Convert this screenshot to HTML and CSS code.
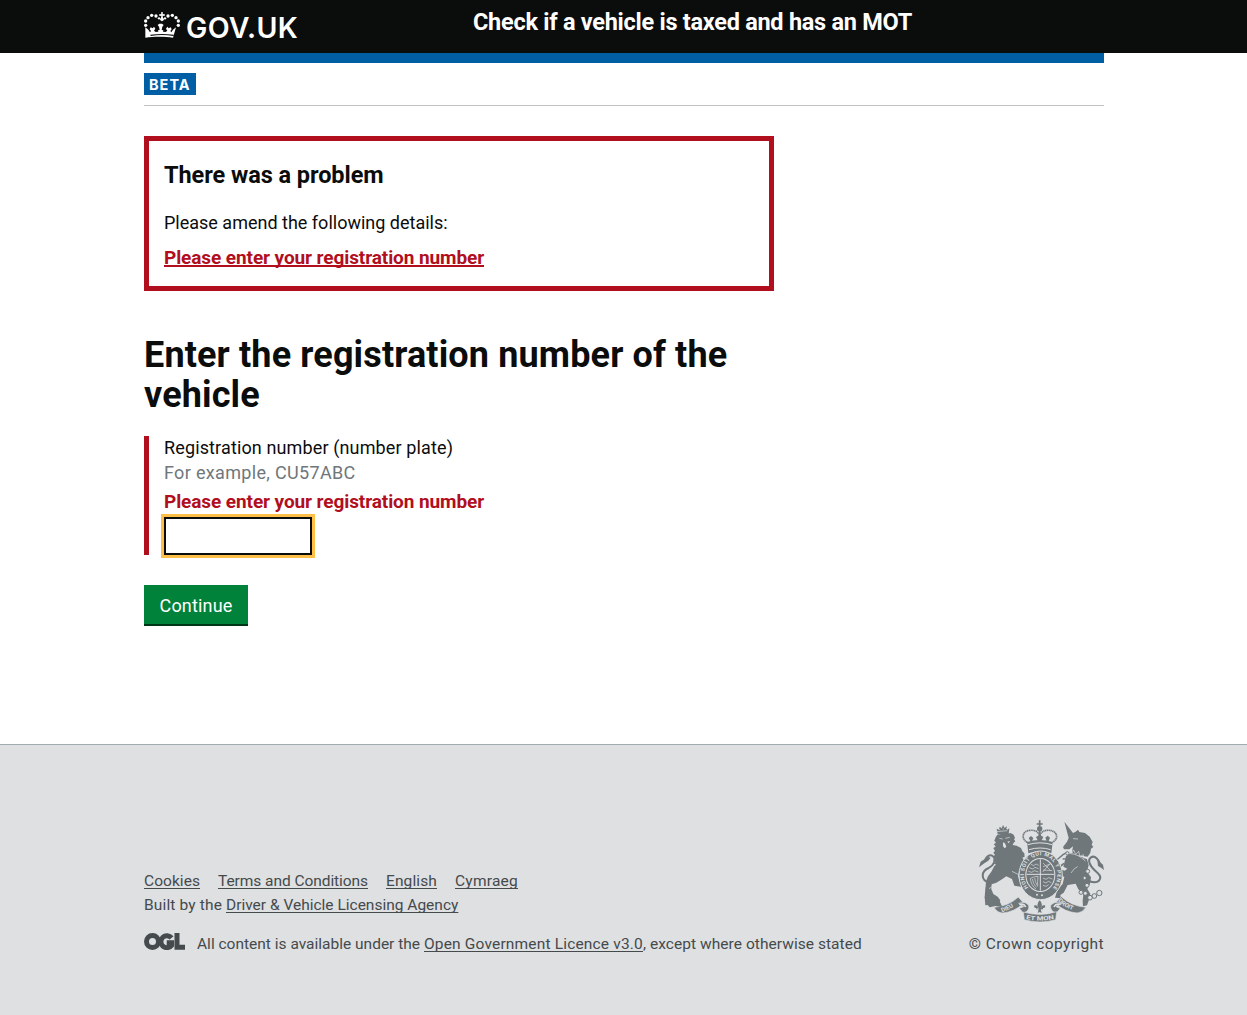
FILE: index.html
```
<!DOCTYPE html>
<html lang="en">
<head>
<meta charset="utf-8">
<title>Check if a vehicle is taxed and has an MOT</title>
<link rel="stylesheet" href="styles.css">
</head>
<body>
<header class="header">
  <div class="header-inner">
    <a class="logo" href="#">
      <svg class="crown" viewBox="30 36 108 78" aria-hidden="true">
        <g fill="#fff">
          <path d="M81 37h6l-1 6 6-1v6l-6-1 1 7h-6l1-7-6 1v-6l6 1z"/>
          <circle cx="84" cy="58" r="5.5"/>
          <circle cx="66" cy="48" r="5"/><circle cx="53" cy="46" r="5"/><circle cx="42" cy="53" r="5"/><circle cx="35" cy="63" r="5"/><circle cx="35" cy="76" r="5"/>
          <circle cx="102" cy="48" r="5"/><circle cx="115" cy="46" r="5"/><circle cx="126" cy="53" r="5"/><circle cx="133" cy="63" r="5"/><circle cx="133" cy="76" r="5"/>
          <circle cx="75" cy="55" r="3.5"/><circle cx="93" cy="55" r="3.5"/>
          <path fill-rule="evenodd" d="M34 82l9 7 5 8 3-4-4-5 3-6 6 3 4-5 4 6-4 6 5 4 8-1-1-4 5-1-2-10-4-5 5-4h8l5 4-4 5-2 10 5 1-1 4 8 1 5-4-4-6 4-6 4 5 6-3 3 6-4 5 3 4 5-8 9-7-9 31c-24-4-58-4-83 0zM50 108c22-4 46-4 68 0l1-4c-23-3-47-3-70 0z"/>
        </g>
      </svg>
      <span class="logo-text">GOV.UK</span>
    </a>
    <span class="service">Check if a vehicle is taxed and has an MOT</span>
  </div>
</header>
<main class="main">
  <div class="phase"><strong class="tag">BETA</strong></div>
  <section class="summary">
    <h2>There was a problem</h2>
    <p>Please amend the following details:</p>
    <a class="error" href="#reg">Please enter your registration number</a>
  </section>
  <h1>Enter the registration number of the vehicle</h1>
  <form>
    <div class="group">
      <label class="label" for="reg">Registration number (number plate)</label>
      <span class="hint">For example, CU57ABC</span>
      <span class="error">Please enter your registration number</span>
      <input class="input" id="reg" type="text">
    </div>
    <button class="button" type="button">Continue</button>
  </form>
</main>
<footer class="footer">
  <div class="footer-inner">
    <div>
      <nav class="links"><a class="cookies" href="#">Cookies</a><a class="terms" href="#">Terms and Conditions</a><a class="english" href="#">English</a><a class="cymraeg" href="#">Cymraeg</a></nav>
      <div class="built"><span>Built by the&nbsp;</span><a href="#">Driver &amp; Vehicle Licensing Agency</a></div>
      <div class="licence">
        <svg class="ogl" viewBox="0 0 41 17" aria-hidden="true">
          <g fill="none" stroke="#454a4c" stroke-width="5">
            <circle cx="8.5" cy="8.5" r="6"/>
            <path d="M27.6 4.9A6 6 0 1 0 27.6 12.4V9.7H22.7"/>
            <path d="M33 0V14.2H41"/>
          </g>
        </svg>
        <span class="all">All content is available under the&nbsp;</span><a class="ogl-link" href="#">Open Government Licence v3.0</a><span class="except">, except where otherwise stated</span>
      </div>
    </div>
    <div class="copyright">
      <svg class="arms" viewBox="27 24 375 306" role="img" aria-label="Royal coat of arms">
        <defs>
          <path id="motto" d="M175 227A50 58 0 1 1 249 227"/>
          <path id="dieu" d="M96 301Q126 291 148 269"/>
          <path id="mon" d="M168 321Q210 331 254 320"/>
          <path id="droit" d="M264 267Q290 293 329 300"/>
        </defs>
        <g fill="#6f777b">
          <!-- lion -->
          <path d="M80 50l7 3 2-9 6 5 4-10 5 9 6-5 1 10 7-4-2 17-33 1z"/>
          <path d="M77 76l5-8 12-2 14 0 14-3 9 5 4 10-3 4 4 6-5 4-3 7 12 2 13 7 4 10 6 6 1 10-7 3 5 8-5 8 2 11-7 3 3 10-8 1-3 15 7 18 12 9-2 6-28-5-7-20-17-8-13 9-17 10-14 5-1 15 6 14 13 8 8 11-5 9-29-6-13-11 2-28 1-6 1-15 6-15 10-14 9-17 5-4-7-4 6-5-7-3 6-7-7-5 6-6-5-5 5-7-5-7 7-6-6-6 7-5-5-6z"/>
          <!-- unicorn -->
          <path d="M283 29l26 34 8-4 7-6 4 7 17 3 14 11 9 16-3 8 5 7-7 5-2 12-8 12-40-6-7-8 3-17-11 9-16 0-3-7 12-16 5-11z"/>
          <path d="M288 132l18-10 45 20 5 18-5 19 12 17-3 20-8 15 9 15-5 20-5 14-12 3-1-16 2-21-15-14-8-17-24 4-12 23-10 7 2 10-18-2 7-23 16-18 5-22-19-4-18-19-9-5 6-9 18 5 10 10 13 4 8-6-12-6z"/>
        </g>
        <g fill="none" stroke="#6f777b" stroke-width="6">
          <path d="M60 213C29 204 34 177 56 168C75 157 78 139 68 132C59 125 50 134 45 144"/>
          <path d="M357 207C386 219 400 199 383 183C361 165 350 145 363 136C375 128 386 144 391 157"/>
          <path d="M261 143l18-15 12-7 8 10-8 9-13 1" stroke-width="4"/>
          <path d="M282 154l-11 9-7 15" stroke-width="5"/>
        </g>
        <g fill="#6f777b">
          <path d="M27 166l5-17 22-14 8 2-7 9-12 8z"/>
          <path d="M382 144l8 7 9 7 3 16-9-7-9-5z"/>
        </g>
        <g fill="none" stroke="#dee0e2" stroke-width="2">
          <path d="M79 59l33-3M86 51l5 3M98 49l4 3M108 49l5 2"/>
          <path d="M88 79l10 2M106 79l13-3"/>
          <path d="M61 161l6-12M126 178l22 11M57 230l17-11"/>
          <path d="M309 80l15 1M302 125q22 1 44 22M305 124l6-10 6 13 9-9 4 16 10-6 2 13"/>
          <path d="M303 183l10-13 10-6"/>
        </g>
        <path d="M99 91l6 3 4 10-5 5-5-6zM112 89l8-2-4 7z" fill="#dee0e2"/>
        <!-- chain -->
        <g fill="#dee0e2" stroke="#6f777b" stroke-width="3">
          <circle cx="353" cy="178" r="6"/><circle cx="344" cy="198" r="5"/><circle cx="351" cy="220" r="6"/><circle cx="333" cy="241" r="6"/><circle cx="346" cy="244" r="6"/><circle cx="360" cy="257" r="7"/><circle cx="373" cy="252" r="7"/><circle cx="388" cy="243" r="8"/><circle cx="292" cy="124" r="5"/>
        </g>
        <!-- crown -->
        <g fill="none" stroke="#6f777b" stroke-width="5">
          <path d="M172 91C153 81 157 60 174 56C192 52 206 58 209 72C212 58 227 52 244 56C263 61 266 81 247 91" stroke-dasharray="4 1.4"/>
          <path d="M209 55v34M200 36h18M209 25v18"/>
        </g>
        <g fill="#6f777b">
          <circle cx="209" cy="50" r="8"/>
          <path d="M171 90q38-12 77 0l-4 34q-35-12-69 0z"/>
          <path d="M183 90l-7-12 7-6 7 6-5 12zM204 87l-6-12 11-7 11 7-6 12zM231 89l-5-12 7-6 7 6-5 12z"/>
        </g>
        <path d="M173 98q37-11 73 0M177 113q34-10 65 0" fill="none" stroke="#dee0e2" stroke-width="3"/>
        <!-- garter and shield -->
        <ellipse cx="212" cy="190" rx="65" ry="73" fill="#6f777b" stroke="#dee0e2" stroke-width="3"/>
        <ellipse cx="211" cy="189" rx="45" ry="51" fill="#dee0e2"/>
        <ellipse cx="211" cy="189" rx="42" ry="48" fill="#6f777b"/>
        <path d="M211 142v94M170 187h82" stroke="#dee0e2" stroke-width="3"/>
        <g fill="none" stroke="#dee0e2" stroke-width="2">
          <path d="M183 157l8 4 7-5 8 4M178 167l10 4 7-5 11 4M175 178l10 3 8-5 12 4"/>
          <path d="M219 153l22 22M240 155l-22 25M219 164l22-8M219 174l28 2"/>
          <path d="M219 198l9 4 8-5 11 4M219 209l9 4 7-5 9 4M219 220l9 3 8-5"/>
          <path d="M181 199q12-6 23-6-2 17-1 31M187 201q2 14 12 25M194 198q1 11 7 21M181 199q2 22 17 32"/>
        </g>
        <g class="motto" fill="#dee0e2" font-size="16">
          <text><textPath href="#motto" textLength="255">HONI SOIT QUI MAL Y PENSE</textPath></text>
        </g>
        <circle cx="201" cy="248" r="3" fill="#dee0e2"/><circle cx="216" cy="250" r="3" fill="#dee0e2"/>
        <!-- scroll -->
        <g fill="#6f777b" stroke="#dee0e2" stroke-width="2">
          <path d="M72 286q43-3 73-31l16 19q-28 26-63 29-16 0-26-17z"/>
          <path d="M146 274q18-8 30 6 4 17-16 23l-12-14 13-5z"/>
          <path d="M348 286q-44-4-74-32l-18 20q28 26 65 29 16 0 27-17z"/>
          <path d="M274 274q-19-8-32 6-3 17 17 23l12-14-13-5z"/>
          <path d="M160 300q51 15 100-1l-3 24q-47 14-94 0z"/>
        </g>
        <path d="M148 277q14-3 19 8M272 277q-15-3-20 8" fill="none" stroke="#dee0e2" stroke-width="5"/>
        <g class="motto" fill="#dee0e2" font-size="18">
          <text><textPath href="#dieu">DIEU</textPath></text>
          <text><textPath href="#mon" textLength="85" lengthAdjust="spacingAndGlyphs">ET MON</textPath></text>
          <text><textPath href="#droit">DROIT</textPath></text>
        </g>
        <g fill="#6f777b">
          <path d="M209 265q13 12 0 28-13-16 0-28zM206 294q-1-17-13-14-3 10 8 8M212 294q1-17 13-14 3 10-8 8M199 288h20v4h-20zM206 291h6l3 12-6-3-6 3z"/>
          <path d="M44 255l8-7 23 6 14 14 8 17-21-3-17 4-6-7-7 1z"/>
        </g>
      </svg>
      <a class="crown-copy" href="#">© Crown copyright</a>
    </div>
  </div>
</footer>
</body>
</html>
```

FILE: styles.css
```
* { box-sizing: border-box; }
body { margin: 0; background: #fff; color: #0b0c0c; font: 18px/25px Roboto, Arial, sans-serif; }
h1, h2, p { margin: 0; }
.header { height: 53px; background: #0b0c0c; }
.header-inner, .main, .footer-inner { width: 960px; margin: 0 auto; }
.header-inner, .main { position: relative; left: 0.5px; }
.header-inner { display: flex; align-items: flex-start; }
.logo { display: flex; width: 329px; padding-top: 12px; color: #fff; text-decoration: none; }
.crown { width: 36px; height: 26px; flex: none; }
.logo-text { margin-left: 6px; font: 600 28.5px/31px Inter, sans-serif; letter-spacing: 0.3px; }
.service { padding-top: 7px; color: #fff; font-size: 23.5px; line-height: 30px; font-weight: 700; letter-spacing: -0.27px; }
.main { height: 691px; border-top: 10px solid #005ea5; }
.phase { display: flex; padding: 10px 0; border-bottom: 1px solid #bfc1c3; }
.tag { width: 52px; height: 22px; padding-left: 5px; background: #005ea5; color: #fff; font: 700 14.5px/23px Inter, sans-serif; letter-spacing: 1px; }
.summary { width: 630px; height: 155px; margin-top: 30px; padding: 19px 15px 0; border: 5px solid #b10e1e; }
.summary h2 { margin-bottom: 20px; font-size: 23.5px; line-height: 30px; letter-spacing: -0.06px; }
.summary p { margin-bottom: 10px; }
.error { display: block; color: #b10e1e; font-size: 19px; font-weight: 700; letter-spacing: -0.09px; }
.summary .error { text-decoration: underline 2px; text-underline-offset: 1px; text-decoration-skip-ink: none; }
h1 { width: 630px; margin-top: 44px; font-size: 36px; line-height: 40px; letter-spacing: 0.14px; }
.group { height: 119px; margin: 21px 0 30px; padding-left: 15px; border-left: 5px solid #b10e1e; }
.label, .hint { display: block; }
.label { margin-top: -1px; letter-spacing: 0.13px; }
.hint { color: #6f777b; letter-spacing: 0.33px; }
.group .error { margin: 4px 0 3px; }
.group { display: flex; flex-direction: column; }
.input { display: block; width: 148px; height: 38px; padding: 4px; border: 2px solid #0b0c0c; border-radius: 0; outline: 3px solid #ffbf47; background: #fff; font: inherit; }
.button { display: block; width: 104px; height: 39px; padding: 2px 0 0; border: 0; background: #00823b; box-shadow: 0 2px 0 #003618; color: #fff; font: inherit; letter-spacing: 0.17px; }
.footer { height: 271px; border-top: 1px solid #a1acb2; background: #dee0e2; color: #454a4c; font-size: 15.5px; line-height: 24px; }
.footer a { color: inherit; text-decoration: underline 1px; text-underline-offset: 2px; text-decoration-skip-ink: none; }
.footer-inner { position: relative; left: 0.5px; display: flex; justify-content: space-between; align-items: flex-end; padding-top: 75px; white-space: nowrap; }
.links { display: flex; gap: 18px; }
.cookies { width: 56px; letter-spacing: 0.05px; }
.terms { width: 150px; letter-spacing: -0.06px; }
.english { width: 51px; letter-spacing: 0.12px; }
.cymraeg { letter-spacing: 0.24px; }
.built { display: flex; }
.built span { width: 82px; letter-spacing: 0.15px; }
.licence { display: flex; margin-top: 15px; }
.ogl { width: 41px; height: 17px; margin: 1px 12px 0 0; }
.all { width: 227px; }
.ogl-link { letter-spacing: 0.17px; }
.except { letter-spacing: 0.05px; }
.copyright { display: flex; flex-direction: column; align-items: flex-end; }
.arms { width: 125px; height: 102px; margin-bottom: 10px; }
.footer .crown-copy { text-decoration: none; letter-spacing: 0.4px; }
.motto { font-family: Roboto, sans-serif; font-weight: 700; }
```
